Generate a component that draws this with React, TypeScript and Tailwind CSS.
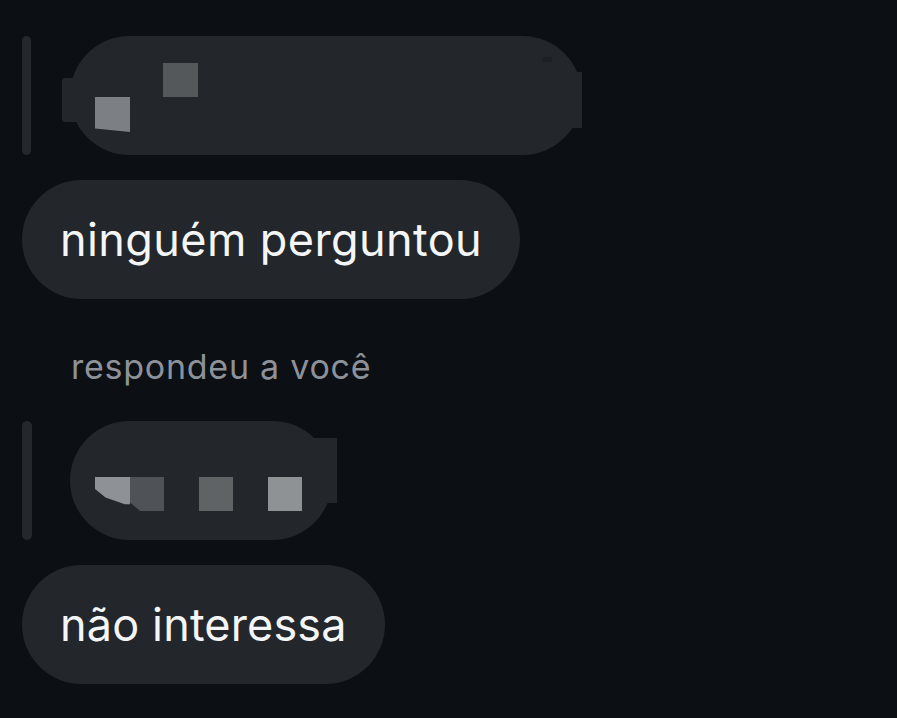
export default function App() {
  return (
    <div className="w-[897px] h-[718px] overflow-hidden bg-[#0c0f13] pl-[22px] pt-[36px] font-['Inter','Noto_Sans',sans-serif]">
      <div className="flex flex-col items-start">
        {/* quoted reply 1 (censored) */}
        <div className="flex h-[119px] gap-[39px]">
          <div className="w-[9px] rounded-full bg-[#24282c]" />
          <div className="relative w-[512px] rounded-full bg-[#23272b]">
            <div className="absolute left-[-8px] top-[42px] h-[44px] w-[20px] rounded-l-[3px] bg-[#23272b]" />
            <div className="absolute left-[500px] top-[36px] h-[56px] w-[12px] bg-[#23272b]" />
            <div className="absolute left-[473px] top-[21px] h-[5px] w-[9px] bg-[#1c1f23]" />
            <div className="absolute left-[93px] top-[27px] h-[34px] w-[35px] bg-[#55585b]" />
            <div className="absolute left-[25px] top-[61px] h-[35px] w-[35px] bg-[#7c8084] [clip-path:polygon(0_0,100%_0,100%_100%,0_90%)]" />
          </div>
        </div>

        <div className="mt-[25px] flex h-[119px] items-center rounded-full bg-[#23272b] px-[38px] text-[45px] tracking-[0.4px] text-[#f4f5f6]">
          ninguém perguntou
        </div>

        <div className="mt-[48px] pl-[49px] text-[34px] leading-[40px] tracking-[0.75px] text-[#8d929a]">respondeu a você</div>

        {/* quoted reply 2 (censored) */}
        <div className="mt-[34px] flex h-[119px] gap-[38px]">
          <div className="w-[10px] rounded-full bg-[#24282c]" />
          <div className="relative flex w-[262px] items-start rounded-full bg-[#23272b] pl-[25px] pt-[56px]">
            <div className="absolute left-[232px] top-[17px] h-[65px] w-[35px] bg-[#23272b]" />
            <div className="h-[34px] w-[35px] bg-[#8e9195] [clip-path:polygon(0_0,100%_0,100%_80%,85%_80%,30%_60%,0_35%)]" />
            <div className="h-[34px] w-[34px] bg-[#4f5357] [clip-path:polygon(0_0,100%_0,100%_100%,30%_100%,0_75%)]" />
            <div className="ml-[35px] h-[34px] w-[34px] bg-[#5f6366]" />
            <div className="ml-[35px] h-[34px] w-[34px] bg-[#8f9294]" />
          </div>
        </div>

        <div className="mt-[25px] flex h-[119px] items-center rounded-full bg-[#23272b] px-[38px] text-[45px] tracking-[0.15px] text-[#f4f5f6]">
          não interessa
        </div>
      </div>
    </div>
  );
}
